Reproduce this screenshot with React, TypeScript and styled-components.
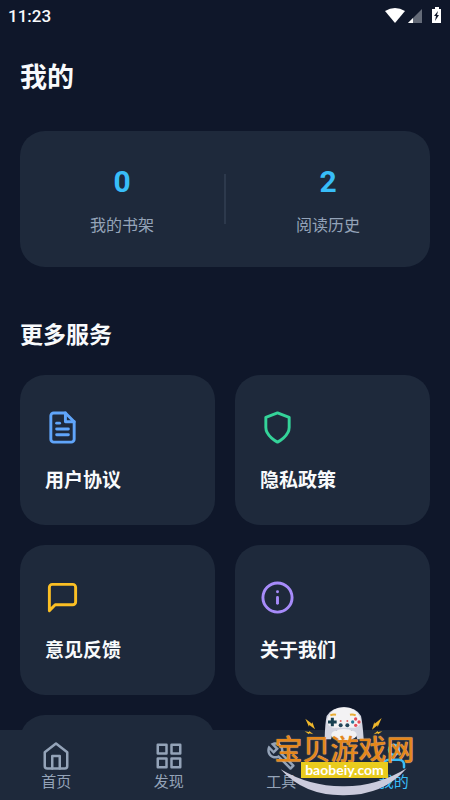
import React from "react";
import styled, { createGlobalStyle } from "styled-components";
import { FiFileText, FiGrid, FiHome, FiInfo, FiMessageSquare, FiShield, FiUser } from "react-icons/fi";
import { MdOutlineBuild } from "react-icons/md";

const GlobalStyle = createGlobalStyle`
  * { box-sizing: border-box; }
  body {
    margin: 0;
    background: #0f172a;
    color: #f8fafc;
    font-family: Roboto, "Noto Sans CJK SC", sans-serif;
  }
  button { border: 0; margin: 0; font: inherit; color: inherit; cursor: pointer; }
`;

const Screen = styled.div`
  display: flex;
  flex-direction: column;
  height: 100vh;
  background: #0f172a;
`;

const StatusBar = styled.header`
  display: flex;
  align-items: center;
  justify-content: space-between;
  flex: none;
  height: 32px;
  padding: 0 8px;
`;

const Clock = styled.time`
  font-size: 17px;
  line-height: 24px;
  font-weight: 500;
`;

const StatusIcons = styled.svg`
  width: 57px;
  height: 18px;
`;

const Content = styled.main`
  flex: 1;
  min-height: 0;
  overflow: hidden;
  padding: 26px 20px 0;
`;

const PageTitle = styled.h1`
  margin: 0 0 33px;
  font-size: 27px;
  line-height: 40px;
  font-weight: 700;
`;

const Stats = styled.section`
  display: flex;
  align-items: center;
  padding: 30px 0;
  border-radius: 25px;
  background: #1e293b;
`;

const Stat = styled.button`
  display: flex;
  flex: 1;
  flex-direction: column;
  align-items: center;
  gap: 12px;
  padding: 0;
  background: none;
`;

const StatValue = styled.strong`
  color: #38bdf8;
  font-size: 30px;
  line-height: 42px;
  font-weight: 700;
`;

const StatLabel = styled.span`
  color: #94a3b8;
  font-size: 16px;
  line-height: 22px;
`;

const Divider = styled.div`
  width: 2px;
  height: 50px;
  background: #2d394c;
`;

const SectionTitle = styled.h2`
  margin: 52px 0 22px;
  font-size: 23px;
  line-height: 34px;
  font-weight: 700;
`;

const Services = styled.div`
  display: grid;
  grid-template-columns: 1fr 1fr;
  grid-auto-rows: 150px;
  gap: 20px;
`;

const ServiceCard = styled.button<{ $tint: string }>`
  display: flex;
  flex-direction: column;
  align-items: flex-start;
  gap: 22px;
  padding: 35px 25px 0;
  border-radius: 25px;
  background: #1e293b;
  svg {
    width: 35px;
    height: 35px;
    color: ${(p) => p.$tint};
  }
`;

const ServiceLabel = styled.span`
  font-size: 19px;
  line-height: 28px;
  font-weight: 700;
`;

const TabBar = styled.nav`
  position: relative;
  display: flex;
  flex: none;
  height: 70px;
  background: #1e293b;
`;

const Tab = styled.button<{ $active?: boolean }>`
  display: flex;
  flex: 1;
  flex-direction: column;
  align-items: center;
  padding: 11px 0 0;
  background: none;
  color: ${(p) => (p.$active ? "#38bdf8" : "#94a3b8")};
  font-size: 15px;
  line-height: 22px;
  svg {
    width: 30px;
    height: 30px;
  }
`;

const Watermark = styled.div`
  position: absolute;
  right: 35px;
  bottom: 0;
  width: 141px;
  height: 95px;
  pointer-events: none;
`;

const WatermarkArt = styled.svg`
  position: absolute;
  inset: 0;
  width: 141px;
  height: 95px;
`;

const WatermarkText = styled.div`
  position: relative;
  display: flex;
  flex-direction: column;
  align-items: center;
  padding-top: 29px;
`;

const BrandName = styled.span`
  color: #e4871c;
  font-family: "Noto Sans CJK SC", sans-serif;
  font-size: 28px;
  line-height: 28px;
  font-weight: 500;
  white-space: nowrap;
  text-shadow: 0 0 1px #ecd3a6;
`;

const BrandUrl = styled.span`
  padding: 0 4px;
  background: #e9cb1d;
  color: #ffffff;
  font-family: Lato, sans-serif;
  font-size: 14px;
  line-height: 16px;
  font-weight: 700;
`;

const services = [
  { label: "用户协议", tint: "#60a5fa", Icon: FiFileText },
  { label: "隐私政策", tint: "#34d399", Icon: FiShield },
  { label: "意见反馈", tint: "#fbbf24", Icon: FiMessageSquare },
  { label: "关于我们", tint: "#a78bfa", Icon: FiInfo },
];

const tabs = [
  { label: "首页", Icon: FiHome },
  { label: "发现", Icon: FiGrid },
  { label: "工具", Icon: MdOutlineBuild },
  { label: "我的", Icon: FiUser, active: true },
];

function SiteMark() {
  return (
    <Watermark>
      <WatermarkArt viewBox="42 15 423 285" aria-hidden="true">
        <path d="M62 208Q150 260 250 259Q350 260 440 205Q370 287 250 286Q132 287 62 208Z" fill="#cbcbdc" />
        <path d="M200 48Q216 22 252 22Q288 22 303 48Q308 70 311 118H292Q287 96 272 90H232Q217 96 213 118H194Q195 70 200 48Z" fill="#d3d5e1" />
        <path d="M203 54Q216 22 252 22Q288 22 301 54Q306 78 286 83H218Q198 78 203 54Z" fill="#f3f2f4" />
        <ellipse cx="252" cy="104" rx="38" ry="17" fill="#f3f2f4" />
        <path d="M211 46q8-4 17-2M270 44q9-2 17 2" fill="none" stroke="#e9ad36" strokeWidth="6" />
        <path d="M217 53v26M204 66h26" stroke="#173f50" strokeWidth="9" />
        <circle cx="242" cy="76" r="6" fill="#24465a" />
        <circle cx="262" cy="76" r="6" fill="#24465a" />
        <circle cx="242" cy="63" r="3" fill="#df6663" />
        <circle cx="262" cy="63" r="3" fill="#df6663" />
        <circle cx="287" cy="57" r="5" fill="#e64c58" />
        <circle cx="287" cy="76" r="5" fill="#e64c58" />
        <circle cx="278" cy="66" r="5" fill="#267b99" />
        <circle cx="297" cy="66" r="5" fill="#e64c58" />
        <path d="M136 56l20 15 1-5 8 22-17-13-1 5ZM134 94l13 2 1-3 12 10-12-3-1 3Z" fill="#efb72b" />
        <path d="M365 54l-21 17-1-5-7 23 16-13 1 5ZM367 94l-13 2-1-3-12 10 12-3 1 3Z" fill="#efb72b" />
      </WatermarkArt>
      <WatermarkText>
        <BrandName>宝贝游戏网</BrandName>
        <BrandUrl>baobeiy.com</BrandUrl>
      </WatermarkText>
    </Watermark>
  );
}

export default function App() {
  return (
    <Screen>
      <GlobalStyle />
      <StatusBar>
        <Clock>11:23</Clock>
        <StatusIcons viewBox="0 0 57 18" aria-hidden="true">
          <path d="M0 4Q10-2 20 4L10 16Z" fill="#fff" />
          <path d="M37 2v14H23Z" fill="#646b78" />
          <path d="M28 11v5h-5Z" fill="#fff" />
          <path d="M50 0h4v2h2v14h-9V2h3Z" fill="#fff" />
          <path d="M53 4l-4 5h2l-1 5 4-6h-2Z" fill="#0f172a" />
        </StatusIcons>
      </StatusBar>
      <Content>
        <PageTitle>我的</PageTitle>
        <Stats>
          <Stat>
            <StatValue>0</StatValue>
            <StatLabel>我的书架</StatLabel>
          </Stat>
          <Divider />
          <Stat>
            <StatValue>2</StatValue>
            <StatLabel>阅读历史</StatLabel>
          </Stat>
        </Stats>
        <SectionTitle>更多服务</SectionTitle>
        <Services>
          {services.map(({ label, tint, Icon }) => (
            <ServiceCard key={label} $tint={tint}>
              <Icon />
              <ServiceLabel>{label}</ServiceLabel>
            </ServiceCard>
          ))}
          <ServiceCard as="div" $tint="#94a3b8" />
        </Services>
      </Content>
      <TabBar>
        {tabs.map(({ label, Icon, active }) => (
          <Tab key={label} $active={active} aria-current={active ? "page" : undefined}>
            <Icon />
            {label}
          </Tab>
        ))}
        <SiteMark />
      </TabBar>
    </Screen>
  );
}
